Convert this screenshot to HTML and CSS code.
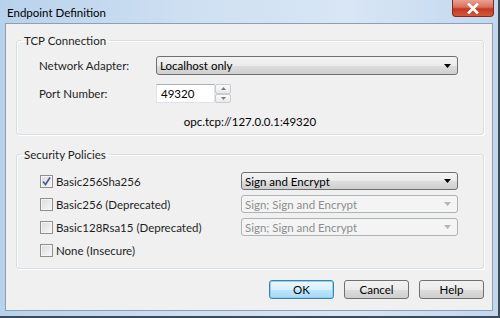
FILE: index.html
```html
<!DOCTYPE html>
<html>
<head>
<meta charset="utf-8">
<link rel="stylesheet" href="styles.css">
</head>
<body>
<div class="window">
  <div class="titlebar">
    <span class="title">Endpoint Definition</span>
    <div class="close">
      <svg width="14" height="11" viewBox="0 0 14 11"><path d="M3 1.5 L11 9.5 M11 1.5 L3 9.5" stroke="#fff" stroke-width="2.6" stroke-linecap="square"/></svg>
    </div>
  </div>
  <div class="client">
    <fieldset class="group">
      <legend>TCP Connection</legend>
      <div class="tcp">
        <div class="form">
          <span class="lbl">Network Adapter:</span>
          <div class="combo adapter"><span class="val">Localhost only</span><svg class="arrow" width="7" height="4" viewBox="0 0 7 4"><path d="M0 0 H7 L3.5 4 Z" fill="#000"/></svg></div>
          <span class="lbl">Port Number:</span>
          <div class="spin">
            <div class="textbox">49320</div>
            <div class="spinbtns">
              <div class="sbtn"><svg width="5" height="3" viewBox="0 0 5 3"><path d="M0 3 H5 L2.5 0 Z" fill="#7a7a7a"/></svg></div>
              <div class="sbtn"><svg width="5" height="3" viewBox="0 0 5 3"><path d="M0 0 H5 L2.5 3 Z" fill="#7a7a7a"/></svg></div>
            </div>
          </div>
        </div>
        <div class="url">opc.tcp://127.0.0.1:49320</div>
      </div>
    </fieldset>
    <fieldset class="group sec">
      <legend>Security Policies</legend>
      <div class="policies">
        <div class="check"><span class="box checked"><svg width="11" height="11" viewBox="0 0 11 11"><path d="M2 5.5 L4.5 8.5 L9 1.5" stroke="#4a5f96" stroke-width="1.7" fill="none"/></svg></span><span>Basic256Sha256</span></div>
        <div class="combo"><span class="val">Sign and Encrypt</span><svg class="arrow" width="7" height="4" viewBox="0 0 7 4"><path d="M0 0 H7 L3.5 4 Z" fill="#000"/></svg></div>
        <div class="check"><span class="box"></span><span>Basic256 (Deprecated)</span></div>
        <div class="combo disabled"><span class="val">Sign; Sign and Encrypt</span><svg class="arrow" width="7" height="4" viewBox="0 0 7 4"><path d="M0 0 H7 L3.5 4 Z" fill="#b4b4b4"/></svg></div>
        <div class="check"><span class="box"></span><span>Basic128Rsa15 (Deprecated)</span></div>
        <div class="combo disabled"><span class="val">Sign; Sign and Encrypt</span><svg class="arrow" width="7" height="4" viewBox="0 0 7 4"><path d="M0 0 H7 L3.5 4 Z" fill="#b4b4b4"/></svg></div>
        <div class="check"><span class="box"></span><span>None (Insecure)</span></div>
      </div>
    </fieldset>
    <div class="buttons">
      <div class="btn default">OK</div>
      <div class="btn">Cancel</div>
      <div class="btn">Help</div>
    </div>
  </div>
</div>
</body>
</html>
```

FILE: styles.css
```css
* { box-sizing: border-box; }
html, body {
  margin: 0;
  padding: 0;
  width: 500px;
  height: 318px;
  overflow: hidden;
  background: #d4e3f3;
}
body {
  font-family: "Lato", "Noto Sans", sans-serif;
  font-size: 11.5px;
  color: #1e1e1e;
}
.window {
  width: 500px;
  height: 318px;
  display: flex;
  flex-direction: column;
  background: linear-gradient(90deg, #b9d2ec 0%, #cfe0f2 40%, #d8e6f5 70%, #c2d7ee 100%);
  border-right: 2px solid #3d4a58;
  border-bottom: 2px solid #3d4a58;
  padding: 0 5px 0 5px;
}
.titlebar {
  height: 23px;
  flex: none;
  display: flex;
  align-items: flex-start;
  justify-content: space-between;
}
.title {
  font-size: 11.5px;
  line-height: 15px;
  margin: 5px 0 0 2px;
  color: #000;
}
.close {
  width: 42px;
  height: 17px;
  margin-right: -1px;
  border: 1px solid #7a2f22;
  border-top: none;
  border-radius: 0 0 4px 4px;
  background: linear-gradient(#e8a293 0%, #d96f59 45%, #c2391f 55%, #d4583c 100%);
  display: flex;
  align-items: center;
  justify-content: center;
}
.client {
  flex: none;
  height: 288px;
  background: #f0f0f0;
  border: 1px solid #8d9fb5;
  padding: 9px 8px 0 10px;
  display: flex;
  flex-direction: column;
}
.group {
  margin: 0;
  padding: 0;
  border: 1px solid #d5dfe5;
  border-radius: 3px;
  box-shadow: inset 1px 1px 0 #fff, 1px 1px 0 #fff;
}
.group legend {
  margin-left: 4px;
  padding: 0 3px;
  line-height: 15px;
  color: #1e1e1e;
}
.tcp {
  padding: 8px 0 5px 22px;
}
.form {
  display: grid;
  grid-template-columns: 117px auto;
  row-gap: 9px;
  align-items: center;
}
.lbl {
  line-height: 15px;
}
.combo {
  height: 19px;
  border: 1px solid #707070;
  border-radius: 3px;
  background: linear-gradient(#f3f3f3 0%, #ebebeb 50%, #dddddd 51%, #cfcfcf 100%);
  display: flex;
  align-items: center;
  justify-content: space-between;
  padding: 0 6px 0 3px;
  color: #000;
}
.combo.adapter {
  width: 302px;
}
.combo .val {
  line-height: 15px;
}
.combo.disabled {
  background: #f4f4f4;
  border-color: #adb2b5;
  color: #8d8d8d;
}
.spin {
  display: flex;
  height: 19px;
}
.textbox {
  width: 59px;
  height: 19px;
  background: #fff;
  border: 1px solid #dfe3e8;
  border-top-color: #abadb3;
  padding: 1px 0 0 4px;
  line-height: 15px;
  color: #000;
}
.spinbtns {
  width: 16px;
  display: flex;
  flex-direction: column;
}
.sbtn {
  flex: 1;
  border: 1px solid #c8ccd2;
  border-radius: 2px;
  background: linear-gradient(#fbfbfb, #e9e9e9);
  display: flex;
  align-items: center;
  justify-content: center;
}
.url {
  text-align: center;
  margin: 11px 0 0 -22px;
  line-height: 15px;
  color: #000;
}
.sec {
  margin-top: 12px;
}
.policies {
  padding: 10px 0 9px 23px;
  display: grid;
  grid-template-columns: 201px 217px;
  grid-auto-rows: 18px;
  row-gap: 5px;
}
.policies .combo {
  height: 18px;
}
.check {
  display: flex;
  align-items: center;
  gap: 3px;
  line-height: 15px;
}
.box {
  width: 13px;
  height: 13px;
  border: 1px solid #8e8f8f;
  background: linear-gradient(135deg, #dcdcdc, #f7f7f7);
  box-shadow: inset 0 0 0 1px #f4f4f4;
  display: flex;
  align-items: center;
  justify-content: center;
}
.buttons {
  margin-top: 11px;
  display: flex;
  justify-content: flex-end;
  gap: 10px;
}
.btn {
  width: 65px;
  height: 19px;
  border: 1px solid #707070;
  border-radius: 3px;
  background: linear-gradient(#f2f2f2 0%, #ebebeb 50%, #dddddd 51%, #cfcfcf 100%);
  display: flex;
  align-items: center;
  justify-content: center;
  line-height: 15px;
  color: #000;
}
.btn.default {
  border-color: #3c7fb1;
  background: linear-gradient(#eaf6fd 0%, #d9f0fc 50%, #bee6fd 51%, #a7d9f5 100%);
  box-shadow: inset 0 0 0 1px #8fd0f3;
}
```
